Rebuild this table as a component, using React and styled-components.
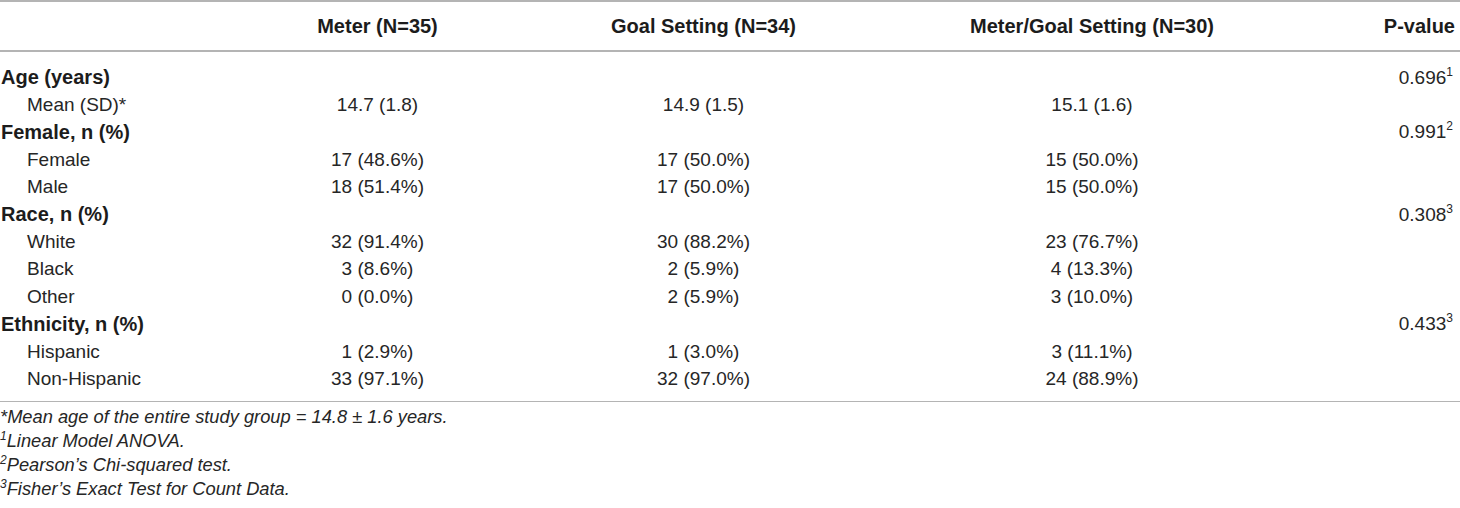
import styled, { createGlobalStyle } from "styled-components";

const GlobalStyle = createGlobalStyle`
  html, body {
    margin: 0;
    padding: 0;
    background: #ffffff;
  }
  body {
    font-family: "Liberation Sans", Arial, sans-serif;
    color: #262626;
  }
`;

const groups = [
  {
    label: "Age (years)",
    p: "0.696",
    note: "1",
    rows: [{ label: "Mean (SD)*", values: ["14.7 (1.8)", "14.9 (1.5)", "15.1 (1.6)"] }],
  },
  {
    label: "Female, n (%)",
    p: "0.991",
    note: "2",
    rows: [
      { label: "Female", values: ["17 (48.6%)", "17 (50.0%)", "15 (50.0%)"] },
      { label: "Male", values: ["18 (51.4%)", "17 (50.0%)", "15 (50.0%)"] },
    ],
  },
  {
    label: "Race, n (%)",
    p: "0.308",
    note: "3",
    rows: [
      { label: "White", values: ["32 (91.4%)", "30 (88.2%)", "23 (76.7%)"] },
      { label: "Black", values: ["3 (8.6%)", "2 (5.9%)", "4 (13.3%)"] },
      { label: "Other", values: ["0 (0.0%)", "2 (5.9%)", "3 (10.0%)"] },
    ],
  },
  {
    label: "Ethnicity, n (%)",
    p: "0.433",
    note: "3",
    rows: [
      { label: "Hispanic", values: ["1 (2.9%)", "1 (3.0%)", "3 (11.1%)"] },
      { label: "Non-Hispanic", values: ["33 (97.1%)", "32 (97.0%)", "24 (88.9%)"] },
    ],
  },
];

const footnotes = [
  { mark: "*", text: "Mean age of the entire study group = 14.8 ± 1.6 years.", plain: true },
  { mark: "1", text: "Linear Model ANOVA." },
  { mark: "2", text: "Pearson’s Chi-squared test." },
  { mark: "3", text: "Fisher’s Exact Test for Count Data." },
];

export default function App() {
  return (
    <>
      <GlobalStyle />
      <Page>
        <HeadRow>
          <Cell />
          <HeadCell>Meter (N=35)</HeadCell>
          <HeadCell>Goal Setting (N=34)</HeadCell>
          <HeadCell>Meter/Goal Setting (N=30)</HeadCell>
          <HeadCell $right>P-value</HeadCell>
        </HeadRow>

        <Body>
          {groups.map((g) => (
            <div key={g.label}>
              <Row>
                <GroupLabel>{g.label}</GroupLabel>
                <Cell />
                <Cell />
                <Cell />
                <PCell>
                  {g.p}
                  <Sup>{g.note}</Sup>
                </PCell>
              </Row>
              {g.rows.map((r) => (
                <Row key={r.label}>
                  <SubLabel>{r.label}</SubLabel>
                  {r.values.map((v, i) => (
                    <ValueCell key={i}>{v}</ValueCell>
                  ))}
                  <Cell />
                </Row>
              ))}
            </div>
          ))}
        </Body>

        <Notes>
          {footnotes.map((n) => (
            <Note key={n.mark}>
              {n.plain ? n.mark : <NoteSup>{n.mark}</NoteSup>}
              {n.text}
            </Note>
          ))}
        </Notes>
      </Page>
    </>
  );
}

const Page = styled.div`
  width: 1460px;
`;

const columns = "215px 325px 327px 450px 143px";

const Row = styled.div`
  display: grid;
  grid-template-columns: ${columns};
  height: 27.4px;
  align-items: center;
  font-size: 19px;
`;

const HeadRow = styled(Row)`
  height: 48px;
  border-top: 2px solid #b4b4b4;
  border-bottom: 2px solid #b4b4b4;
  font-size: 20px;
  font-weight: bold;
  color: #1c1c1c;
`;

const Cell = styled.div`
  white-space: nowrap;
`;

const HeadCell = styled(Cell)`
  text-align: ${(p) => (p.$right ? "right" : "center")};
  padding-right: ${(p) => (p.$right ? "5px" : "0")};
`;

const Body = styled.div`
  padding: 12px 0 8px;
  border-bottom: 1.5px solid #b4b4b4;
`;

const GroupLabel = styled(Cell)`
  font-size: 20px;
  font-weight: bold;
  color: #1c1c1c;
  padding-left: 1px;
`;

const SubLabel = styled(Cell)`
  padding-left: 27px;
`;

const ValueCell = styled(Cell)`
  text-align: center;
`;

const PCell = styled(Cell)`
  text-align: right;
  padding-right: 7px;
`;

const Sup = styled.sup`
  font-size: 12px;
  line-height: 0;
  vertical-align: 8px;
`;

const Notes = styled.div`
  padding-top: 3px;
`;

const Note = styled.div`
  font-size: 18.3px;
  font-style: italic;
  line-height: 24px;
  white-space: nowrap;
`;

const NoteSup = styled.sup`
  font-size: 12px;
  line-height: 0;
  vertical-align: 7px;
`;
